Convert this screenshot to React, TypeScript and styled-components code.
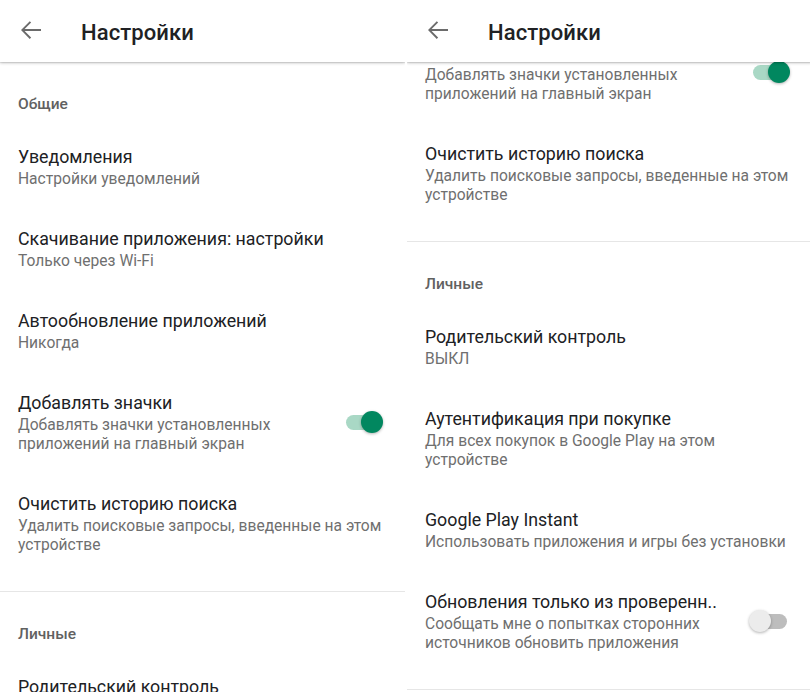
import React from "react";
import styled, { createGlobalStyle } from "styled-components";

const Global = createGlobalStyle`
  html, body { margin: 0; padding: 0; background: #ffffff; overflow: hidden; }
  body { font-family: Roboto, "Noto Sans", sans-serif; -webkit-font-smoothing: antialiased; }
`;

const Page = styled.div`
  width: 810px;
  height: 692px;
  display: flex;
  gap: 2px;
  overflow: hidden;
  background: #ffffff;
`;

const Screen = styled.div`
  flex: 0 0 405px;
  height: 692px;
  display: flex;
  flex-direction: column;
  background: #ffffff;
  position: relative;
  overflow: hidden;
`;

const Header = styled.header`
  height: 62px;
  flex: 0 0 62px;
  display: flex;
  align-items: center;
  background: #ffffff;
  box-shadow: 0 1px 3px rgba(0, 0, 0, 0.22), 0 1px 1px rgba(0, 0, 0, 0.08);
  position: relative;
  z-index: 2;
`;

const BackButton = styled.button`
  width: 30px;
  height: 30px;
  margin-left: 16px;
  margin-top: -3px;
  padding: 0;
  border: 0;
  background: none;
  display: flex;
  align-items: center;
  justify-content: center;
  color: #6b6b6b;
`;

const Title = styled.h1`
  margin: 2px 0 0 35px;
  font-size: 22px;
  font-weight: 500;
  color: #202124;
  letter-spacing: 0.1px;
`;

const Viewport = styled.div`
  flex: 1;
  overflow: hidden;
  position: relative;
`;

const Content = styled.div<{ $scroll: number }>`
  transform: translateY(${(p) => -p.$scroll}px);
`;

const Section = styled.section`
  padding-bottom: 18px;
  border-bottom: 1px solid #e6e6e6;
`;

const SectionTitle = styled.div`
  padding: 32px 18px 11px;
  line-height: 20px;
  font-size: 15.5px;
  font-weight: 500;
  color: #616161;
`;

const Row = styled.div`
  display: flex;
  align-items: center;
  padding: 19px 22px 18px 18px;
`;

const RowText = styled.div`
  flex: 1;
  min-width: 0;
`;

const RowTitle = styled.div`
  font-size: 17.8px;
  line-height: 26px;
  color: #202124;
  white-space: nowrap;
`;

const RowSub = styled.div`
  font-size: 15.6px;
  line-height: 19px;
  color: #6f6f6f;
  white-space: nowrap;
`;

const Switch = styled.div`
  position: relative;
  flex: 0 0 41px;
  height: 24px;
  margin-left: 12px;
`;

const Track = styled.div<{ $on: boolean }>`
  position: absolute;
  left: 4px;
  top: 4.5px;
  width: 34px;
  height: 15px;
  border-radius: 8px;
  background: ${(p) => (p.$on ? "#a9d8c5" : "#bdbdbd")};
`;

const Thumb = styled.div<{ $on: boolean }>`
  position: absolute;
  top: 1px;
  left: ${(p) => (p.$on ? "19px" : "0px")};
  width: 22px;
  height: 22px;
  border-radius: 50%;
  background: ${(p) => (p.$on ? "#01875f" : "#ececec")};
  box-shadow: 0 1px 3px rgba(0, 0, 0, 0.3);
`;

type Item = { title: string; sub: string[]; toggle?: boolean };
type Group = { name: string; items: Item[] };

const groups: Group[] = [
  {
    name: "Общие",
    items: [
      { title: "Уведомления", sub: ["Настройки уведомлений"] },
      { title: "Скачивание приложения: настройки", sub: ["Только через Wi-Fi"] },
      { title: "Автообновление приложений", sub: ["Никогда"] },
      {
        title: "Добавлять значки",
        sub: ["Добавлять значки установленных", "приложений на главный экран"],
        toggle: true,
      },
      {
        title: "Очистить историю поиска",
        sub: ["Удалить поисковые запросы, введенные на этом", "устройстве"],
      },
    ],
  },
  {
    name: "Личные",
    items: [
      { title: "Родительский контроль", sub: ["ВЫКЛ"] },
      {
        title: "Аутентификация при покупке",
        sub: ["Для всех покупок в Google Play на этом", "устройстве"],
      },
      {
        title: "Google Play Instant",
        sub: ["Использовать приложения и игры без установки"],
      },
      {
        title: "Обновления только из проверенн..",
        sub: ["Сообщать мне о попытках сторонних", "источников обновить приложения"],
        toggle: false,
      },
    ],
  },
];

const BackIcon = () => (
  <svg width="30" height="30" viewBox="0 0 24 24" fill="currentColor" aria-hidden>
    <path d="M20 11.2H6.9l5.2-5.2-1.1-1.1L4 12l7 7.1 1.1-1.1-5.2-5.2H20z" />
  </svg>
);

const Settings: React.FC<{ scroll: number }> = ({ scroll }) => (
  <Screen>
    <Header>
      <BackButton aria-label="Назад">
        <BackIcon />
      </BackButton>
      <Title>Настройки</Title>
    </Header>
    <Viewport>
      <Content $scroll={scroll}>
        {groups.map((g) => (
          <Section key={g.name}>
            <SectionTitle>{g.name}</SectionTitle>
            {g.items.map((it) => (
              <Row key={it.title}>
                <RowText>
                  <RowTitle>{it.title}</RowTitle>
                  {it.sub.map((l) => (
                    <RowSub key={l}>{l}</RowSub>
                  ))}
                </RowText>
                {it.toggle !== undefined && (
                  <Switch>
                    <Track $on={it.toggle} />
                    <Thumb $on={it.toggle} />
                  </Switch>
                )}
              </Row>
            ))}
          </Section>
        ))}
      </Content>
    </Viewport>
  </Screen>
);

export default function App() {
  return (
    <>
      <Global />
      <Page>
        <Settings scroll={0} />
        <Settings scroll={350} />
      </Page>
    </>
  );
}
